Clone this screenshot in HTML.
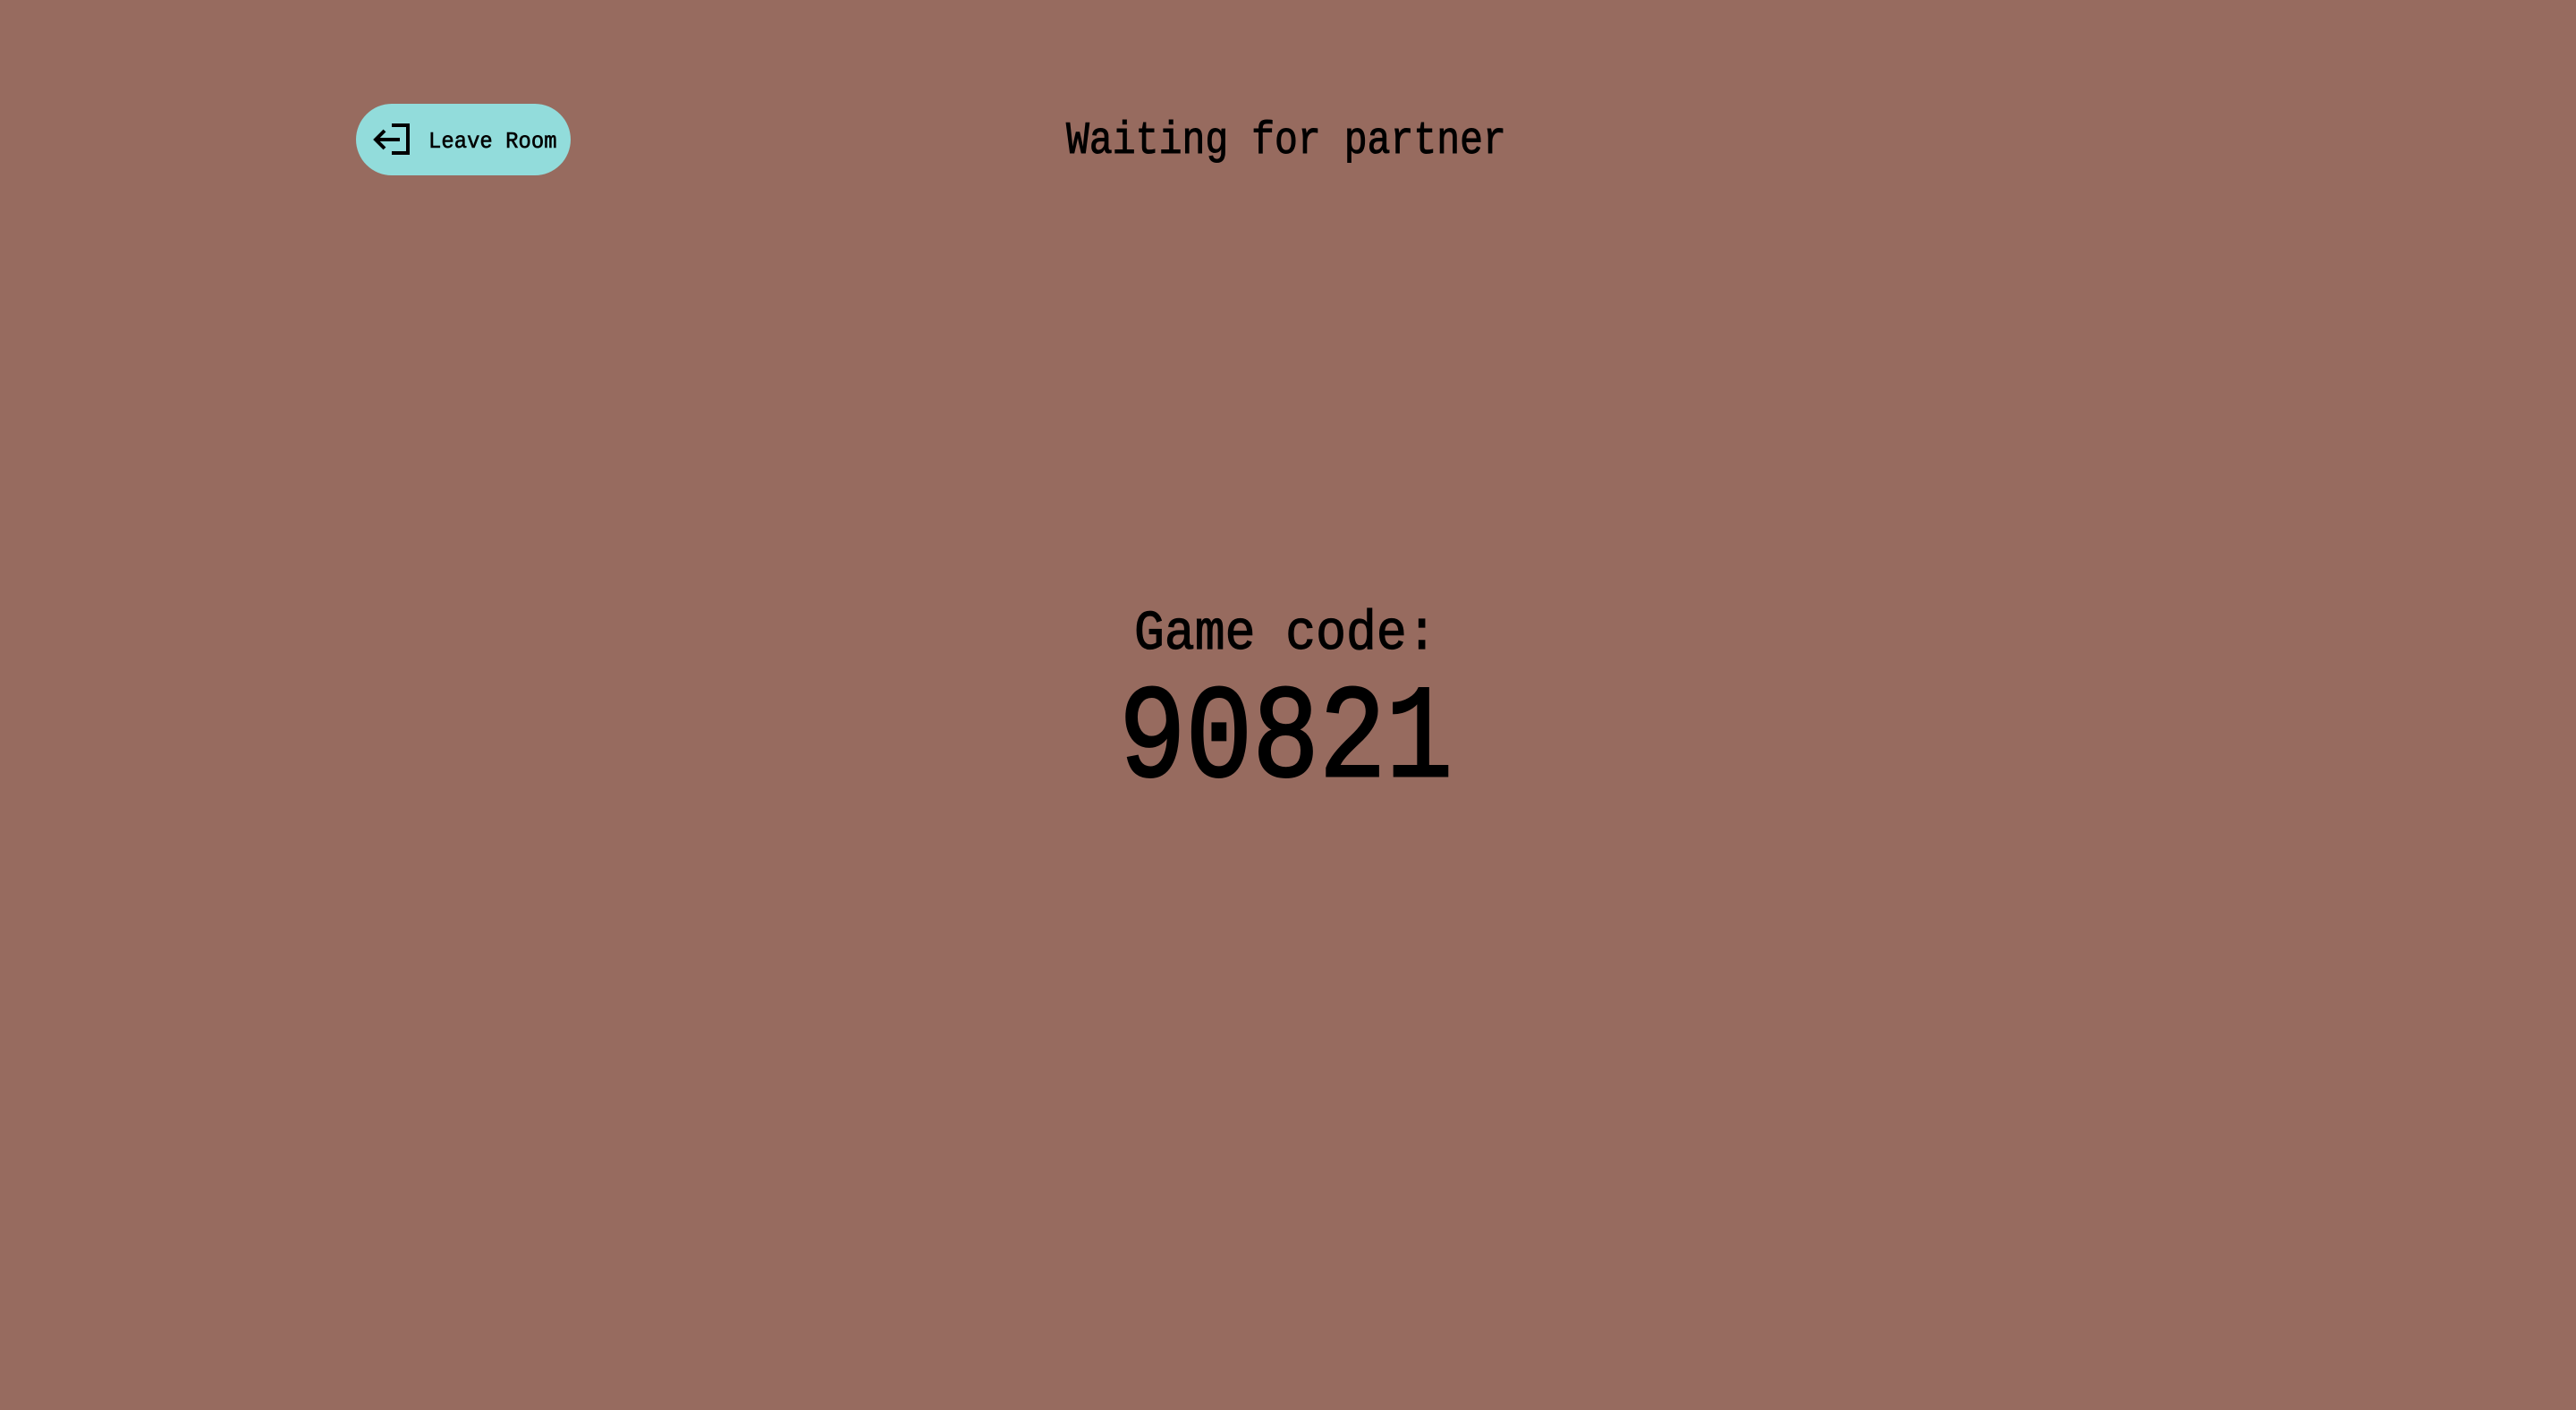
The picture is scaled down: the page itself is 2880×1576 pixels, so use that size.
<!DOCTYPE html>
<html><head><meta charset="utf-8"><style>
html,body{margin:0;padding:0;width:2880px;height:1576px;background:#976b5f;overflow:hidden;font-family:"Liberation Mono",monospace;color:#000}
.t{position:absolute;line-height:1;white-space:nowrap;transform-origin:0 0}
.btn{position:absolute;left:398px;top:116px;width:240px;height:80px;border-radius:40px;background:#92dcdb}
</style></head><body>
<div class="btn"></div>
<svg style="position:absolute;left:410px;top:130px" width="60" height="52" viewBox="410 130 60 52">
<path d="M438 140 H456 V171 H438" fill="none" stroke="#000" stroke-width="4"/>
<path d="M447 156 H421 M430 146 L420 156 L430 166" fill="none" stroke="#000" stroke-width="4"/>
</svg>
<div class="t" style="left:479px;top:145px;font-size:26px;transform:scaleX(0.92);-webkit-text-stroke:0.6px #000">Leave Room</div>
<div class="t" style="left:1192px;top:133px;font-size:51px;transform:scaleX(0.846);-webkit-text-stroke:1px #000">Waiting for partner</div>
<div class="t" style="left:1268px;top:678px;font-size:62px;transform:scaleX(0.91);-webkit-text-stroke:1.2px #000">Game code:</div>
<div class="t" style="left:1251px;top:755px;font-size:148px;transform:scaleX(0.84);-webkit-text-stroke:3px #000">90821</div>
</body></html>
